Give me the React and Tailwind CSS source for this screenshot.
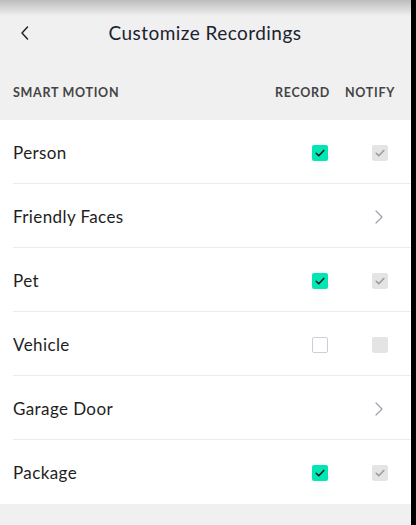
import React from "react";

const rows = [
  { name: "Person", record: true, notify: true },
  { name: "Friendly Faces", link: true },
  { name: "Pet", record: true, notify: true },
  { name: "Vehicle", record: false, notify: false },
  { name: "Garage Door", link: true },
  { name: "Package", record: true, notify: true },
];

const Check = ({ color }) => (
  <svg width="12" height="12" viewBox="0 0 12 12" fill="none">
    <path d="M2.2 6.3 L4.8 8.8 L9.8 3.4" stroke={color} strokeWidth="1.5" strokeLinecap="round" strokeLinejoin="round" />
  </svg>
);

const RecordBox = ({ on }) =>
  on ? (
    <div className="w-4 h-4 rounded-[2px] bg-[#00e6b4] flex items-center justify-center">
      <Check color="#1a1a1a" />
    </div>
  ) : (
    <div className="w-4 h-4 rounded-[2px] bg-white border border-[#c9cfdb]" />
  );

const NotifyBox = ({ on }) => (
  <div className="w-4 h-4 rounded-[2px] bg-[#e4e4e4] flex items-center justify-center">
    {on && <Check color="#9a9a9a" />}
  </div>
);

const App = () => {
  return (
    <div className="w-[416px] h-[525px] flex bg-black overflow-hidden" style={{ fontFamily: "Lato, 'Noto Sans', sans-serif" }}>
      <div className="w-[411px] h-full bg-[#f0f0f0] flex flex-col">
        <div className="relative h-[66px] flex items-center">
          <div className="absolute top-0 left-0 right-0 h-[16px] bg-gradient-to-b from-[#bdbdbd] to-[#f0f0f0]" />
          <div className="relative w-full flex items-center px-[19px]">
            <svg width="12" height="16" viewBox="0 0 12 16" fill="none">
              <path d="M8.5 2 L3 8 L8.5 14" stroke="#222" strokeWidth="1.5" strokeLinecap="round" strokeLinejoin="round" />
            </svg>
            <div className="flex-1 text-center text-[19px] tracking-[0.45px] text-[#1b2230] pr-[12px] -ml-[1px]">Customize Recordings</div>
          </div>
        </div>
        <div className="h-[54px] flex items-center pl-[13px] pr-[8px] text-[12.5px] font-bold tracking-[0.7px] text-[#444]">
          <div className="flex-1">SMART MOTION</div>
          <div className="w-[70px]">RECORD</div>
          <div className="w-[58px]">NOTIFY</div>
        </div>
        <div className="bg-white">
          {rows.map((r, i) => (
            <div key={r.name} className={`ml-[13px] h-[64px] pt-[2px] flex items-center ${i < rows.length - 1 ? "border-b border-[#ececec]" : ""}`}>
              <div className="flex-1 text-[17px] tracking-[0.4px] text-[#1e1e1e]">{r.name}</div>
              {r.link ? (
                <div className="w-[24px] mr-[20px] flex justify-center">
                  <svg width="10" height="16" viewBox="0 0 10 16" fill="none">
                    <path d="M2 2 L8 8 L2 14" stroke="#9aa1ad" strokeWidth="1.2" strokeLinecap="round" strokeLinejoin="round" />
                  </svg>
                </div>
              ) : (
                <div className="flex items-center">
                  <div className="w-[16px] mr-[44px]"><RecordBox on={r.record} /></div>
                  <div className="w-[16px] mr-[23px]"><NotifyBox on={r.notify} /></div>
                </div>
              )}
            </div>
          ))}
        </div>
      </div>
    </div>
  );
};

export default App;
